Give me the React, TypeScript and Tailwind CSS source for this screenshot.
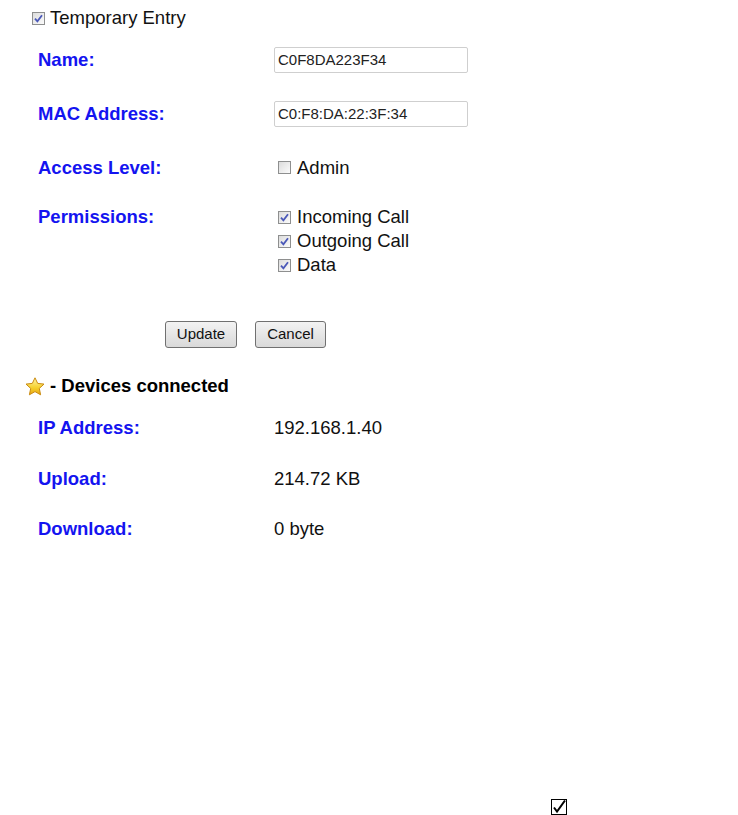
import React from "react";

function Check({ checked }: { checked: boolean }) {
  return (
    <span className="inline-flex h-[13px] w-[13px] shrink-0 items-center justify-center border border-[#8e8f8f] bg-gradient-to-br from-[#dcdcdc] to-[#fbfbfb]">
      {checked && (
        <svg width="9" height="9" viewBox="0 0 9 9">
          <path d="M1 4.6 L3.4 7.3 L8 1.2" fill="none" stroke="#4a58b8" strokeWidth="1.8" />
        </svg>
      )}
    </span>
  );
}

function Star() {
  return (
    <svg width="20" height="19" viewBox="0 0 20 19">
      <defs>
        <linearGradient id="starFill" x1="0" y1="0" x2="0" y2="1">
          <stop offset="0" stopColor="#fff6a8" />
          <stop offset="0.6" stopColor="#f5cf2a" />
          <stop offset="1" stopColor="#e7a514" />
        </linearGradient>
      </defs>
      <path
        d="M10 0.8 L12.7 6.4 L19 7.1 L14.3 11.4 L15.6 17.8 L10 14.6 L4.4 17.8 L5.7 11.4 L1 7.1 L7.3 6.4 Z"
        fill="url(#starFill)"
        stroke="#c98a10"
        strokeWidth="1"
        strokeLinejoin="round"
      />
    </svg>
  );
}

const label = "text-[18.5px] font-bold text-[#1414f0]";
const text = "text-[18.5px] leading-none";

export default function App() {
  const perms = ["Incoming Call", "Outgoing Call", "Data"];

  return (
    <div className="relative h-[815px] w-[738px] overflow-hidden bg-white font-['Liberation_Sans',Arial,sans-serif] text-[#111]">
      {/* Temporary entry */}
      <div className="box-content flex h-[20px] items-center gap-[5px] pl-[32px] pt-[8px]">
        <Check checked />
        <span className={text}>Temporary Entry</span>
      </div>

      {/* Form */}
      <div className="pl-[38px]">
        <div className="mt-[18px] grid h-[26px] grid-cols-[236px_1fr] items-center">
          <span className={label}>Name:</span>
          <div className="flex h-[26px] w-[194px] items-center rounded-[2px] border border-[#cfcfcf] px-[3px] text-[15px] text-[#222]">
            C0F8DA223F34
          </div>
        </div>

        <div className="mt-[28px] grid h-[26px] grid-cols-[236px_1fr] items-center">
          <span className={label}>MAC Address:</span>
          <div className="flex h-[26px] w-[194px] items-center rounded-[2px] border border-[#cfcfcf] px-[3px] text-[15px] text-[#222]">
            C0:F8:DA:22:3F:34
          </div>
        </div>

        <div className="mt-[28px] grid h-[24px] grid-cols-[236px_1fr] items-center">
          <span className={label}>Access Level:</span>
          <div className="flex items-center gap-[6px] pl-[4px]">
            <Check checked={false} />
            <span className={text}>Admin</span>
          </div>
        </div>

        <div className="mt-[27px] grid grid-cols-[236px_1fr] items-start">
          <span className={`${label} flex h-[24px] items-center`}>Permissions:</span>
          <div className="flex flex-col pl-[4px]">
            {perms.map((p) => (
              <div key={p} className="flex h-[24px] items-center gap-[6px]">
                <Check checked />
                <span className={text}>{p}</span>
              </div>
            ))}
          </div>
        </div>
      </div>

      {/* Buttons */}
      <div className="mt-[44px] flex gap-[18px] pl-[165px]">
        <button className="h-[27px] w-[72px] rounded-[3px] border border-[#707070] bg-gradient-to-b from-[#f3f3f3] to-[#d9d9d9] text-[15px] text-[#111]">
          Update
        </button>
        <button className="h-[27px] w-[71px] rounded-[3px] border border-[#707070] bg-gradient-to-b from-[#f3f3f3] to-[#d9d9d9] text-[15px] text-[#111]">
          Cancel
        </button>
      </div>

      {/* Devices connected */}
      <div className="mt-[26px] flex h-[24px] items-center gap-[5px] pl-[25px]">
        <Star />
        <span className="text-[18.5px] font-bold leading-none text-black">- Devices connected</span>
      </div>

      <div className="pl-[38px]">
        <div className="mt-[16px] grid h-[24px] grid-cols-[236px_1fr] items-center">
          <span className={label}>IP Address:</span>
          <span className={text}>192.168.1.40</span>
        </div>
        <div className="mt-[27px] grid h-[24px] grid-cols-[236px_1fr] items-center">
          <span className={label}>Upload:</span>
          <span className={text}>214.72 KB</span>
        </div>
        <div className="mt-[26px] grid h-[24px] grid-cols-[236px_1fr] items-center">
          <span className={label}>Download:</span>
          <span className={text}>0 byte</span>
        </div>
      </div>

      {/* Footer mark */}
      <div className="mt-[260px] flex pl-[551px]">
        <span className="flex h-[16px] w-[16px] items-center justify-center border-[1.5px] border-black">
          <svg width="14" height="14" viewBox="0 0 14 14">
            <path d="M2 7.5 L5 11.5 L13 0.5" fill="none" stroke="#000" strokeWidth="2" />
          </svg>
        </span>
      </div>
    </div>
  );
}
